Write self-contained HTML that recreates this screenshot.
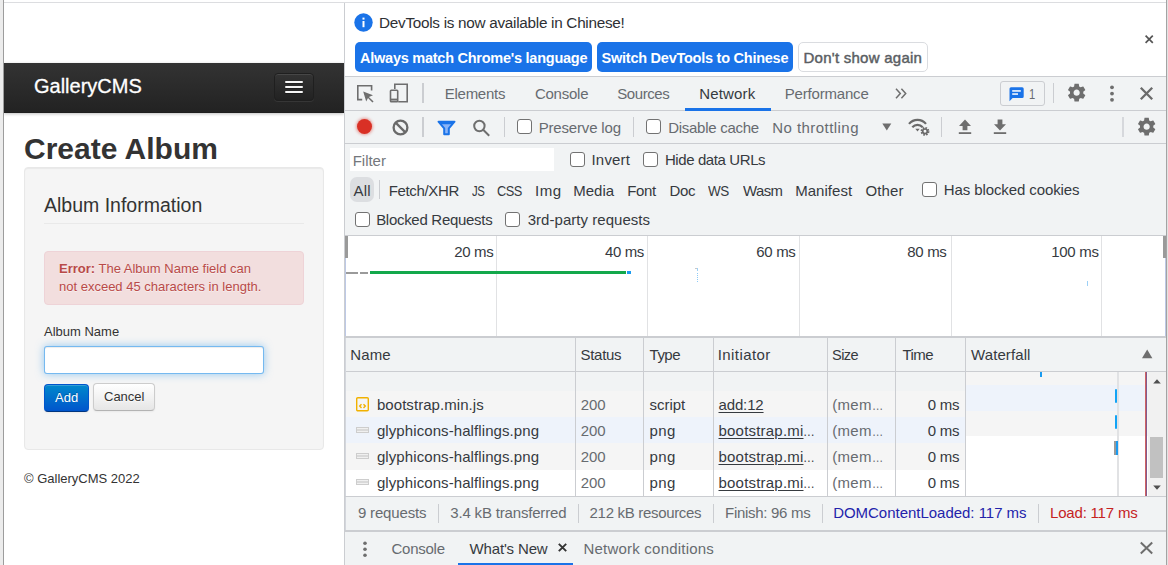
<!DOCTYPE html>
<html lang="en">
<head>
<meta charset="utf-8">
<title>Create Album - GalleryCMS</title>
<style>
*{box-sizing:border-box}
html,body{margin:0;padding:0}
body{width:1168px;height:565px;overflow:hidden;position:relative;background:#fff;
 font-family:"Liberation Sans",Arial,sans-serif;font-size:13px;line-height:18px;color:#333}
.abs,#page *,#dt *{position:absolute}
#page form{position:static;margin:0}
/* ---------- window frame ---------- */
#frameL{left:0;top:0;width:3px;height:565px;background:#ececec}
#frameL2{left:3px;top:0;width:1px;height:565px;background:#9d9d9d}
#frameT{left:4px;top:2px;width:1162px;height:1px;background:#dcdde0}
#frameR{left:1166px;top:0;width:1px;height:565px;background:#a3a3a3}
#frameR2{left:1167px;top:0;width:1px;height:565px;background:#e3e3e3}
/* ---------- page ---------- */
#page{left:4px;top:3px;width:340px;height:562px;overflow:hidden;background:#fff}
#nav{left:0;top:60px;width:340px;height:50px;background:linear-gradient(#333,#222);
 box-shadow:0 1px 3px rgba(0,0,0,.25),inset 0 -1px 0 rgba(0,0,0,.1)}
#brand{left:30px;top:7.5px;-webkit-text-stroke:.3px #fff;font-size:20px;line-height:30px;color:#fff;font-weight:400;white-space:nowrap}
#tog{left:270px;top:10px;width:40px;height:28px;border:1px solid #1f1f1f;border-radius:4px;
 background:linear-gradient(#333,#222);box-shadow:inset 0 1px 0 rgba(255,255,255,.1),0 1px 0 rgba(255,255,255,.075)}
#tog i{left:10px;width:18px;height:2px;background:#f5f5f5;border-radius:1px;box-shadow:0 1px 0 rgba(0,0,0,.25)}
#h1{left:20px;top:128px;margin:0;font-size:30px;line-height:36px;font-weight:700;color:#333;white-space:nowrap}
#well{left:20px;top:164px;width:300px;height:283px;background:#f5f5f5;border:1px solid #e8e8e8;border-radius:4px;
 box-shadow:inset 0 1px 1px rgba(0,0,0,.05)}
#legend{left:19px;top:19px;width:260px;height:37px;font-size:19.5px;line-height:36px;color:#333;border-bottom:1px solid #e9e9e9;white-space:nowrap}
#alert{left:19px;top:83px;width:260px;height:54px;padding:8px 35px 8px 14px;background:#f2dede;border:1px solid #eed3d7;
 border-radius:4px;color:#b94a48;text-shadow:0 1px 0 rgba(255,255,255,.5);font-size:13px;line-height:18px}
#alert *{position:static}
#lbl{left:19px;top:155px;color:#333;white-space:nowrap}
#inp{display:block;margin:0;padding:4px;outline:none;-webkit-appearance:none;appearance:none;font:13px/18px "Liberation Sans",Arial,sans-serif;color:#555;left:19px;top:178px;width:220px;height:28px;background:#fff;border:1px solid rgba(82,168,236,.8);border-radius:3px;
 box-shadow:inset 0 1px 1px rgba(0,0,0,.075),0 0 8px rgba(82,168,236,.6)}
.btn{display:block;margin:0;font-family:inherit;cursor:pointer;text-decoration:none;-webkit-appearance:none;appearance:none;height:28px;padding:4px 10px;font-size:13px;line-height:18px;border-radius:4px;white-space:nowrap;text-align:center}
#add{left:19px;top:216px;width:45px;color:#fff;text-shadow:0 -1px 0 rgba(0,0,0,.25);background:linear-gradient(#08c,#05c);
 border:1px solid #0055cc;border-bottom-color:#003580;box-shadow:inset 0 1px 0 rgba(255,255,255,.2),0 1px 2px rgba(0,0,0,.05)}
#cancel{left:68px;top:215px;width:62px;text-align:left;color:#333;text-shadow:0 1px 1px rgba(255,255,255,.75);background:linear-gradient(#fff,#e6e6e6);
 border:1px solid #ccc;border-bottom-color:#b3b3b3;box-shadow:inset 0 1px 0 rgba(255,255,255,.2),0 1px 2px rgba(0,0,0,.05)}
#foot{left:20px;top:467px;white-space:nowrap;color:#333}
/* ---------- devtools ---------- */
#dt{left:344px;top:3px;width:822px;height:562px;background:#f1f3f4;border-left:1px solid #cbcdd1;overflow:hidden;
 font-size:14.5px;color:#333639}
#dt .hl{left:0;width:821px;height:1px;background:#cbcdd1}
#dt .vl{width:1px;background:#cbcdd1}
#dt .t{white-space:pre;line-height:20px;font-size:15px;transform-origin:0 50%}
#dt .b{font-weight:700}
#dt .semi{-webkit-text-stroke:.45px currentColor}
#dt .u{text-decoration:underline;text-underline-offset:2px;text-decoration-thickness:1px}
#dt .cb{width:15px;height:15px;background:#fff;border:1.4px solid #727272;border-radius:3px}
#dt svg{overflow:visible}
</style>
</head>
<body>
<div class="abs" id="frameL"></div><div class="abs" id="frameL2"></div>
<div class="abs" id="frameT"></div>
<div class="abs" id="frameR"></div><div class="abs" id="frameR2"></div>

<!-- ================= page ================= -->
<div class="abs" id="page">
 <div id="nav">
  <div id="brand">GalleryCMS</div>
  <div id="tog"><i style="top:7px"></i><i style="top:12px"></i><i style="top:17px"></i></div>
 </div>
 <h1 id="h1">Create Album</h1>
 <div id="well">
  <form>
  <div id="legend">Album Information</div>
  <div id="alert"><strong>Error:</strong> The Album Name field can not exceed 45 characters in length.</div>
  <label id="lbl" for="inp">Album Name</label>
  <input id="inp" type="text" name="name" value="" autocomplete="off">
  <button type="button" class="btn" id="add">Add</button>
  <a class="btn" id="cancel">Cancel</a>
  </form>
 </div>
 <div id="foot">© GalleryCMS 2022</div>
</div>

<!-- ================= devtools ================= -->
<div class="abs" id="dt">
<div id="dtin" style="left:-345px;top:-3px;width:1168px;height:565px">
<!-- infobar -->
<div style="left:345px;top:3px;width:821px;height:73px;background:#fff"></div>
<svg style="left:354px;top:12.500px" width="19" height="19" viewBox="0 0 19 19"><circle cx="9.5" cy="9.5" r="9.2" fill="#1a73e8"/><rect x="8.5" y="8" width="2" height="6.2" fill="#fff"/><rect x="8.5" y="4.6" width="2" height="2" fill="#fff"/></svg>
<div style="left:355px;top:42px;width:237px;height:30px;background:#1a73e8;border-radius:5px"></div>
<div style="left:597px;top:42px;width:196px;height:30px;background:#1a73e8;border-radius:5px"></div>
<div style="left:798px;top:42px;width:130px;height:30px;background:#fff;border:1px solid #dadce0;border-radius:5px"></div>
<svg style="left:1144.700px;top:34.800px" width="8.400" height="8.400" viewBox="0 0 8.400 8.400"><path d="M0.600 0.600L7.800 7.800M7.800 0.600L0.600 7.800" stroke="#555" stroke-width="1.700" fill="none"/></svg>
<div class="hl" style="left:345px;top:76px"></div>

<!-- main tab bar 77..110 -->
<svg style="left:356px;top:84px" width="19" height="19" viewBox="0 0 19 19" fill="none" stroke="#6e6e6e" stroke-width="1.6"><path d="M6.2 15.6H1.8V1.8H15.6V6.4"/><path d="M7.2 7.4L17 11.2L12.9 12.9L17.6 17.6L16.4 18.4L12 13.9L10.2 17.6Z" fill="#6e6e6e" stroke="none"/></svg>
<svg style="left:389px;top:83px" width="20" height="20" viewBox="0 0 20 20" fill="none" stroke="#6e6e6e" stroke-width="1.6"><path d="M5.8 6V1.2H18.2V18.8H9.2"/><rect x="1.5" y="7.2" width="7.2" height="11.6" rx="0.8"/><path d="M1.5 16.6H8.7" stroke-width="2"/></svg>
<div class="vl" style="left:422px;top:83px;height:20px;width:1.5px"></div>
<svg style="left:895px;top:88px" width="12" height="11" viewBox="0 0 12 11" fill="none" stroke="#6e6e6e" stroke-width="1.5"><path d="M1 0.8L5.3 5.5L1 10.2M6.4 0.8L10.7 5.5L6.4 10.2"/></svg>
<div style="left:1000px;top:81px;width:45px;height:25px;border:1px solid #cbcdd1;border-radius:3px;background:#f1f3f4"></div>
<svg style="left:1009px;top:87px" width="15" height="15" viewBox="0 0 15 15"><path d="M2 0.3H13.2A1.5 1.5 0 0 1 14.7 1.8V9.6A1.5 1.5 0 0 1 13.2 11.1H3.6L0.5 14.2V1.8A1.5 1.5 0 0 1 2 0.3Z" fill="#1a73e8"/><rect x="3.2" y="3.2" width="8.6" height="1.5" fill="#fff"/><rect x="3.2" y="6.3" width="5.8" height="1.5" fill="#fff"/></svg>
<div class="vl" style="left:1052.5px;top:83px;height:20px;width:1.5px"></div>
<svg class="gear" style="left:1065.800px;top:81.700px" width="21.300" height="21.300" viewBox="0 0 24 24"><path fill="#6e6e6e" d="M19.43 12.98c.04-.32.07-.64.07-.98s-.03-.66-.07-.98l2.11-1.65c.19-.15.24-.42.12-.64l-2-3.46c-.12-.22-.39-.3-.61-.22l-2.49 1c-.52-.4-1.08-.73-1.69-.98l-.38-2.65C14.46 2.18 14.25 2 14 2h-4c-.25 0-.46.18-.49.42l-.38 2.65c-.61.25-1.17.59-1.69.98l-2.49-1c-.23-.09-.49 0-.61.22l-2 3.46c-.13.22-.07.49.12.64l2.11 1.65c-.04.32-.07.65-.07.98s.03.66.07.98l-2.11 1.65c-.19.15-.24.42-.12.64l2 3.46c.12.22.39.3.61.22l2.49-1c.52.4 1.08.73 1.69.98l.38 2.65c.03.24.24.42.49.42h4c.25 0 .46-.18.49-.42l.38-2.65c.61-.25 1.17-.59 1.69-.98l2.49 1c.23.09.49 0 .61-.22l2-3.46c.12-.22.07-.49-.12-.64l-2.11-1.65zM12 15.5c-1.93 0-3.5-1.57-3.5-3.5s1.570-3.5 3.5-3.500 3.500 1.570 3.500 3.500-1.570 3.500-3.500 3.500z"/></svg>
<svg style="left:1110px;top:85px" width="4" height="17" viewBox="0 0 4 17" fill="#6e6e6e"><circle cx="2" cy="2.3" r="1.9"/><circle cx="2" cy="8.6" r="1.9"/><circle cx="2" cy="14.8" r="1.9"/></svg>
<svg style="left:1140px;top:87px" width="13" height="13" viewBox="0 0 13 13"><path d="M0.800 0.800L12.200 12.200M12.200 0.800L0.800 12.200" stroke="#6a6a6a" stroke-width="2.300" fill="none"/></svg>
<div class="hl" style="left:345px;top:110px"></div>
<div style="left:685px;top:108px;width:86px;height:3px;background:#1a73e8"></div>

<!-- network toolbar 111..143 -->
<div style="left:357px;top:119.300px;width:15px;height:15px;border-radius:50%;background:#d93025;box-shadow:0 0 3px 1px rgba(217,48,37,.45)"></div>
<svg style="left:391.500px;top:119px" width="17" height="17" viewBox="0 0 17 17" fill="none" stroke="#6a6a6a" stroke-width="2.300"><circle cx="8.500" cy="8.500" r="6.900"/><path d="M3.600 3.600L13.400 13.400"/></svg>
<div class="vl" style="left:422px;top:117px;height:20px;width:1.5px"></div>
<svg style="left:437px;top:120px" width="19" height="16" viewBox="0 0 19 16"><path d="M1.500 1.700H17.500L11.800 8.400V14.300H7.200V8.400Z" fill="#8ab4f8" stroke="#1a73e8" stroke-width="2" stroke-linejoin="round"/><path d="M2 1.500H17L14.600 4.300H4.400Z" fill="#1a73e8"/></svg>
<svg style="left:472px;top:119px" width="19" height="18" viewBox="0 0 19 18" fill="none" stroke="#6e6e6e" stroke-width="2"><circle cx="7.4" cy="7" r="5.2"/><path d="M11.2 10.8L17.2 16.8"/></svg>
<div class="vl" style="left:504px;top:117px;height:20px;width:1px"></div>
<div class="cb" style="left:516.5px;top:119.2px"></div>
<div class="vl" style="left:632.5px;top:117px;height:20px;width:1px"></div>
<div class="cb" style="left:646px;top:119.2px"></div>
<svg style="left:882px;top:123px" width="10" height="8" viewBox="0 0 10 8"><path d="M0.3 0.6H9.3L4.8 7.6Z" fill="#6e6e6e"/></svg>
<svg style="left:908px;top:118px" width="22" height="18" viewBox="0 0 22 18" fill="none" stroke="#6a6a6a"><path d="M1 5.900C5.600 0.500 13.400 0.500 18 5.900" stroke-width="2.200"/><path d="M4.300 9.200C7.200 6 11.800 6 14.700 9.200" stroke-width="2.200"/><path d="M7.300 10.700H11.700L9.500 13.500Z" fill="#6a6a6a" stroke="none"/><circle cx="17" cy="13.300" r="3.300" stroke-width="2.300" stroke-dasharray="1.500 1.090"/><circle cx="17" cy="13.300" r="2.300" stroke-width="1.700"/></svg>
<div class="vl" style="left:941px;top:117px;height:20px;width:1px"></div>
<svg style="left:958px;top:119.300px" width="14" height="16" viewBox="0 0 14 16" fill="#6e6e6e"><path d="M7 0.6L13 7H9.4V11.2H4.600V7H1Z"/><rect x="0.8" y="13.2" width="12.4" height="1.800"/></svg>
<svg style="left:993px;top:119.300px" width="14" height="16" viewBox="0 0 14 16" fill="#6e6e6e"><path d="M7 11.600L13 5.200H9.4V0.600H4.600V5.200H1Z"/><rect x="0.8" y="13.2" width="12.4" height="1.800"/></svg>
<div class="vl" style="left:1122px;top:117px;height:20px;width:2px;background:#d6d8dc"></div>
<svg class="gear" style="left:1135.500px;top:115.800px" width="21.300" height="21.300" viewBox="0 0 24 24"><path fill="#6e6e6e" d="M19.43 12.98c.04-.32.07-.64.07-.98s-.03-.66-.07-.98l2.11-1.65c.19-.15.24-.42.12-.64l-2-3.46c-.12-.22-.39-.3-.61-.22l-2.49 1c-.52-.4-1.08-.73-1.69-.98l-.38-2.65C14.46 2.18 14.25 2 14 2h-4c-.25 0-.46.18-.49.42l-.38 2.65c-.61.25-1.17.59-1.69.98l-2.49-1c-.23-.09-.49 0-.61.22l-2 3.46c-.13.22-.07.49.12.64l2.11 1.65c-.04.32-.07.65-.07.98s.03.66.07.98l-2.11 1.65c-.19.15-.24.42-.12.64l2 3.46c.12.22.39.3.61.22l2.49-1c.52.4 1.08.73 1.69.98l.38 2.65c.03.24.24.42.49.42h4c.25 0 .46-.18.49-.42l.38-2.65c.61-.25 1.17-.59 1.69-.98l2.49 1c.23.09.49 0 .61-.22l2-3.46c.12-.22.07-.49-.12-.64l-2.11-1.65zM12 15.5c-1.93 0-3.5-1.57-3.5-3.5s1.570-3.5 3.5-3.500 3.500 1.570 3.500 3.500-1.570 3.500-3.500 3.500z"/></svg>
<div class="hl" style="left:345px;top:143px"></div>

<!-- filter area 144..235 -->
<div style="left:350px;top:148px;width:204px;height:23px;background:#fff"></div>
<div class="cb" style="left:570px;top:152.2px"></div>
<div class="cb" style="left:643px;top:152.2px"></div>
<div style="left:350px;top:177px;width:23.500px;height:25px;background:#dcdee1;border-radius:7px"></div>
<div class="vl" style="left:379.300px;top:180px;height:19px;width:1px"></div>
<div class="cb" style="left:922px;top:182px"></div>
<div class="cb" style="left:355px;top:212.2px"></div>
<div class="cb" style="left:505px;top:212.2px"></div>
<div class="hl" style="left:345px;top:235px"></div>

<!-- overview 236..336 -->
<div style="left:345px;top:236px;width:821px;height:100px;background:#fff"></div>
<div style="left:345px;top:258px;width:1px;height:78px;background:#bdc9e6"></div>
<div style="left:1165px;top:258px;width:1px;height:78px;background:#bdc9e6"></div>
<div style="left:345px;top:236px;width:3px;height:22px;background:#9a9a9a"></div>
<div style="left:1163px;top:236px;width:3px;height:22px;background:#9a9a9a"></div>
<div style="left:496px;top:236px;width:1px;height:100px;background:#e1e2e4"></div>
<div style="left:647px;top:236px;width:1px;height:100px;background:#e1e2e4"></div>
<div style="left:799px;top:236px;width:1px;height:100px;background:#e1e2e4"></div>
<div style="left:950.500px;top:236px;width:1px;height:100px;background:#e1e2e4"></div>
<div style="left:1101px;top:236px;width:1px;height:100px;background:#e1e2e4"></div>
<div style="left:346px;top:271.500px;width:11.500px;height:2.700px;background:#9a9a9a"></div>
<div style="left:359.500px;top:271.500px;width:8.500px;height:2.700px;background:#9a9a9a"></div>
<div style="left:370px;top:271.300px;width:256px;height:3px;background:#13a84b"></div>
<div style="left:626.500px;top:271.300px;width:4.500px;height:3px;background:#1a9bf0"></div>
<div style="left:694.500px;top:268px;width:2px;height:1px;background:#c8c8c8"></div>
<div style="left:696.500px;top:268px;width:1px;height:3px;background:#9cd0f7"></div>
<div style="left:696.500px;top:273px;width:1px;height:9px;background:repeating-linear-gradient(#8ccaf7 0 1px,#fff 1px 2px)"></div>
<div style="left:1086.500px;top:281px;width:1px;height:5px;background:#9cd0f7"></div>
<div style="left:345px;top:336px;width:821px;height:2px;background:#cbcdd1"></div>

<!-- table header 338..371 -->
<div class="hl" style="left:345px;top:371px"></div>
<svg style="left:1142px;top:349px" width="11" height="10" viewBox="0 0 11 10"><path d="M5.2 0.4L10.4 9.2H0Z" fill="#6e6e6e"/></svg>

<!-- rows -->
<div style="left:345px;top:372px;width:621px;height:19px;background:#f1f3f4"></div>
<div style="left:345px;top:391px;width:621px;height:26px;background:#f5f5f5"></div>
<div style="left:345px;top:417px;width:621px;height:26px;background:#eef3fb"></div>
<div style="left:345px;top:443px;width:621px;height:27px;background:#f5f5f5"></div>
<div style="left:345px;top:470px;width:621px;height:26px;background:#fff"></div>
<!-- waterfall column -->
<div style="left:966px;top:372px;width:182px;height:13px;background:#f5f5f5"></div>
<div style="left:966px;top:385px;width:182px;height:26px;background:#eef3fb"></div>
<div style="left:966px;top:411px;width:182px;height:25px;background:#f5f5f5"></div>
<div style="left:966px;top:436px;width:182px;height:60px;background:#fff"></div>
<div style="left:1117.200px;top:372px;width:1.400px;height:124px;background:#e1e2e4"></div>
<div style="left:1145px;top:372px;width:1px;height:124px;background:#cf6262"></div>
<div style="left:1146px;top:372px;width:1px;height:124px;background:#85598c"></div>
<div style="left:1040px;top:372px;width:2px;height:5px;background:#1a9bf0"></div>
<div style="left:1115px;top:389px;width:2.300px;height:14px;background:#12a3f5;border-radius:1px"></div>
<div style="left:1115px;top:415px;width:2.300px;height:14px;background:#12a3f5;border-radius:1px"></div>
<div style="left:1114px;top:441px;width:2px;height:14px;background:#9a9a9a"></div>
<div style="left:1115.500px;top:441px;width:2px;height:14px;background:#1a9bf0"></div>
<!-- scrollbar -->
<div style="left:1148px;top:372px;width:18px;height:124px;background:#f1f1f1"></div>
<svg style="left:1153px;top:378.500px" width="8" height="5" viewBox="0 0 8 5"><path d="M4 0.300L7.800 4.600H0.200Z" fill="#505050"/></svg>
<svg style="left:1153px;top:485px" width="8" height="5" viewBox="0 0 8 5"><path d="M4 4.700L7.800 0.400H0.200Z" fill="#505050"/></svg>
<div style="left:1150px;top:437px;width:13px;height:41px;background:#c1c1c1"></div>
<!-- column dividers -->
<div class="vl" style="left:575px;top:338px;height:158px"></div>
<div class="vl" style="left:643.200px;top:338px;height:158px"></div>
<div class="vl" style="left:713px;top:338px;height:158px"></div>
<div class="vl" style="left:827px;top:338px;height:158px"></div>
<div class="vl" style="left:895px;top:338px;height:158px"></div>
<div class="vl" style="left:965px;top:338px;height:158px"></div>
<!-- row icons -->
<svg style="left:356px;top:396.600px" width="13" height="15" viewBox="0 0 13 15" fill="none" stroke="#f1b100"><rect x="0.700" y="0.700" width="11.600" height="13.100" rx="1.100" stroke-width="1.400"/><path d="M5.500 7.300L3.700 9.100L5.500 10.900M7.500 7.300L9.300 9.100L7.500 10.900" stroke-width="1.400"/></svg>
<div style="left:356px;top:427.200px;width:13px;height:5.700px;background:linear-gradient(#f0f0f0 0 1px,#d9d9d9 1px 3px,#f0f0f0 3px);border:1px solid #cdcdcd"></div>
<div style="left:356px;top:453.200px;width:13px;height:5.700px;background:linear-gradient(#f0f0f0 0 1px,#d9d9d9 1px 3px,#f0f0f0 3px);border:1px solid #cdcdcd"></div>
<div style="left:356px;top:479.200px;width:13px;height:5.700px;background:linear-gradient(#f0f0f0 0 1px,#d9d9d9 1px 3px,#f0f0f0 3px);border:1px solid #cdcdcd"></div>

<div style="left:345px;top:338px;width:1px;height:192px;background:#d3d6dc"></div>
<!-- status bar 497..529 -->
<div class="hl" style="left:345px;top:496px"></div>
<div class="vl" style="left:438px;top:503.500px;height:19px"></div>
<div class="vl" style="left:578px;top:503.500px;height:19px"></div>
<div class="vl" style="left:712.700px;top:503.500px;height:19px"></div>
<div class="vl" style="left:822px;top:503.500px;height:19px"></div>
<div class="vl" style="left:1037.800px;top:503.500px;height:19px"></div>
<div style="left:345px;top:530px;width:821px;height:2px;background:#cbcdd1"></div>

<!-- drawer 531..565 -->
<svg style="left:363px;top:541px" width="4" height="17" viewBox="0 0 4 17" fill="#6e6e6e"><circle cx="2" cy="2.300" r="1.800"/><circle cx="2" cy="8.300" r="1.800"/><circle cx="2" cy="14.300" r="1.800"/></svg>
<svg style="left:557.500px;top:543.400px" width="9" height="9" viewBox="0 0 9 9"><path d="M0.800 0.800L8.200 8.200M8.200 0.800L0.800 8.200" stroke="#333" stroke-width="1.900" fill="none"/></svg>
<div style="left:457.500px;top:562.500px;width:115px;height:3px;background:#1a73e8"></div>
<svg style="left:1140px;top:542px" width="13" height="12" viewBox="0 0 13 12"><path d="M0.800 0.600L12.200 11.400M12.200 0.600L0.800 11.400" stroke="#6e6e6e" stroke-width="2" fill="none"/></svg>

<span class="t" style="left:379.06px;top:12.65px;color:#2e3034;font-size:15.3px;letter-spacing:-0.284px;">DevTools is now available in Chinese!</span>
<span class="t b" style="left:360.06px;top:47.65px;color:#fff;font-size:14.5px;letter-spacing:-0.251px;">Always match Chrome's language</span>
<span class="t b" style="left:601.60px;top:47.65px;color:#fff;font-size:14.5px;letter-spacing:-0.248px;">Switch DevTools to Chinese</span>
<span class="t semi" style="left:803.50px;top:47.65px;color:#5a5e63;letter-spacing:0.255px;">Don't show again</span>
<span class="t" style="left:444.70px;top:83.65px;color:#676b70;letter-spacing:-0.247px;">Elements</span>
<span class="t" style="left:534.94px;top:83.65px;color:#676b70;letter-spacing:-0.248px;">Console</span>
<span class="t" style="left:617.26px;top:83.65px;color:#676b70;letter-spacing:-0.415px;">Sources</span>
<span class="t" style="left:699.30px;top:83.65px;color:#363a3f;letter-spacing:0.154px;">Network</span>
<span class="t" style="left:784.70px;top:83.65px;color:#676b70;letter-spacing:-0.178px;">Performance</span>
<span class="t" style="left:1029.30px;top:83.65px;color:#676b70;transform:scaleX(0.7431);">1</span>
<span class="t" style="left:538.70px;top:117.65px;color:#676b70;letter-spacing:-0.169px;">Preserve log</span>
<span class="t" style="left:668.24px;top:117.65px;color:#676b70;letter-spacing:-0.283px;">Disable cache</span>
<span class="t" style="left:772.24px;top:117.65px;color:#676b70;letter-spacing:0.449px;">No throttling</span>
<span class="t" style="left:352.70px;top:150.65px;color:#74777c;letter-spacing:-0.021px;">Filter</span>
<span class="t" style="left:591.52px;top:149.65px;color:#363a3f;letter-spacing:0.181px;">Invert</span>
<span class="t" style="left:664.88px;top:149.65px;color:#363a3f;letter-spacing:-0.398px;">Hide data URLs</span>
<span class="t" style="left:353.50px;top:180.65px;color:#363a3f;letter-spacing:0.164px;">All</span>
<span class="t" style="left:388.70px;top:180.65px;color:#363a3f;letter-spacing:-0.345px;">Fetch/XHR</span>
<span class="t" style="left:471.74px;top:180.65px;color:#363a3f;letter-spacing:-0.550px;transform:scaleX(0.7580);">JS</span>
<span class="t" style="left:497.30px;top:180.65px;color:#363a3f;letter-spacing:-0.550px;transform:scaleX(0.8540);">CSS</span>
<span class="t" style="left:534.52px;top:180.65px;color:#363a3f;letter-spacing:0.550px;transform:scaleX(1.0063);">Img</span>
<span class="t" style="left:573.26px;top:180.65px;color:#363a3f;letter-spacing:-0.015px;">Media</span>
<span class="t" style="left:627.24px;top:180.65px;color:#363a3f;letter-spacing:-0.339px;">Font</span>
<span class="t" style="left:669.60px;top:180.65px;color:#363a3f;letter-spacing:-0.344px;">Doc</span>
<span class="t" style="left:708.40px;top:180.65px;color:#363a3f;letter-spacing:-0.550px;transform:scaleX(0.8975);">WS</span>
<span class="t" style="left:742.70px;top:180.65px;color:#363a3f;letter-spacing:-0.550px;transform:scaleX(0.9925);">Wasm</span>
<span class="t" style="left:795.14px;top:180.65px;color:#363a3f;letter-spacing:0.057px;">Manifest</span>
<span class="t" style="left:865.50px;top:180.65px;color:#363a3f;letter-spacing:0.121px;">Other</span>
<span class="t" style="left:943.70px;top:179.65px;color:#363a3f;letter-spacing:-0.093px;">Has blocked cookies</span>
<span class="t" style="left:376.14px;top:209.65px;color:#363a3f;letter-spacing:-0.290px;">Blocked Requests</span>
<span class="t" style="left:527.70px;top:209.65px;color:#363a3f;letter-spacing:0.037px;">3rd-party requests</span>
<span class="t" style="left:454.20px;top:241.65px;color:#363a3f;letter-spacing:-0.340px;">20 ms</span>
<span class="t" style="left:605.06px;top:241.65px;color:#363a3f;letter-spacing:-0.380px;">40 ms</span>
<span class="t" style="left:756.30px;top:241.65px;color:#363a3f;letter-spacing:-0.340px;">60 ms</span>
<span class="t" style="left:907.30px;top:241.65px;color:#363a3f;letter-spacing:-0.340px;">80 ms</span>
<span class="t" style="left:1051.20px;top:241.65px;color:#363a3f;letter-spacing:-0.269px;">100 ms</span>
<span class="t" style="left:350.26px;top:344.65px;color:#363a3f;letter-spacing:0.108px;">Name</span>
<span class="t" style="left:580.60px;top:344.65px;color:#363a3f;letter-spacing:-0.326px;">Status</span>
<span class="t" style="left:649.60px;top:344.65px;color:#363a3f;letter-spacing:-0.544px;">Type</span>
<span class="t" style="left:717.70px;top:344.65px;color:#363a3f;letter-spacing:0.425px;">Initiator</span>
<span class="t" style="left:832.26px;top:344.65px;color:#363a3f;letter-spacing:-0.550px;transform:scaleX(0.9703);">Size</span>
<span class="t" style="left:902.40px;top:344.65px;color:#363a3f;letter-spacing:-0.494px;">Time</span>
<span class="t" style="left:971.06px;top:344.65px;color:#363a3f;letter-spacing:0.089px;">Waterfall</span>
<span class="t" style="left:376.94px;top:394.65px;color:#363a3f;letter-spacing:0.058px;">bootstrap.min.js</span>
<span class="t" style="left:580.80px;top:394.65px;color:#676b70;letter-spacing:-0.166px;">200</span>
<span class="t" style="left:649.60px;top:394.65px;color:#363a3f;letter-spacing:-0.029px;">script</span>
<span class="t u" style="left:718.50px;top:394.65px;color:#363a3f;letter-spacing:-0.138px;">add:12</span>
<span class="t" style="left:832.26px;top:394.65px;color:#676b70;letter-spacing:0.304px;">(mem</span>
<span class="t" style="left:871.70px;top:394.65px;color:#676b70;transform:scaleX(0.7493);">…</span>
<span class="t" style="left:927.70px;top:394.65px;color:#363a3f;letter-spacing:-0.205px;">0 ms</span>
<span class="t" style="left:376.94px;top:420.65px;color:#363a3f;letter-spacing:0.087px;">glyphicons-halflings.png</span>
<span class="t" style="left:580.80px;top:420.65px;color:#676b70;letter-spacing:-0.166px;">200</span>
<span class="t" style="left:649.60px;top:420.65px;color:#363a3f;letter-spacing:0.334px;">png</span>
<span class="t u" style="left:718.50px;top:420.65px;color:#363a3f;letter-spacing:0.205px;">bootstrap.mi</span>
<span class="t" style="left:803.06px;top:420.65px;color:#363a3f;transform:scaleX(0.7867);">…</span>
<span class="t" style="left:832.26px;top:420.65px;color:#676b70;letter-spacing:0.304px;">(mem</span>
<span class="t" style="left:871.70px;top:420.65px;color:#676b70;transform:scaleX(0.7493);">…</span>
<span class="t" style="left:927.70px;top:420.65px;color:#363a3f;letter-spacing:-0.205px;">0 ms</span>
<span class="t" style="left:376.94px;top:446.65px;color:#363a3f;letter-spacing:0.087px;">glyphicons-halflings.png</span>
<span class="t" style="left:580.80px;top:446.65px;color:#676b70;letter-spacing:-0.166px;">200</span>
<span class="t" style="left:649.60px;top:446.65px;color:#363a3f;letter-spacing:0.334px;">png</span>
<span class="t u" style="left:718.50px;top:446.65px;color:#363a3f;letter-spacing:0.205px;">bootstrap.mi</span>
<span class="t" style="left:803.06px;top:446.65px;color:#363a3f;transform:scaleX(0.7867);">…</span>
<span class="t" style="left:832.26px;top:446.65px;color:#676b70;letter-spacing:0.304px;">(mem</span>
<span class="t" style="left:871.70px;top:446.65px;color:#676b70;transform:scaleX(0.7493);">…</span>
<span class="t" style="left:927.70px;top:446.65px;color:#363a3f;letter-spacing:-0.205px;">0 ms</span>
<span class="t" style="left:376.94px;top:472.65px;color:#363a3f;letter-spacing:0.087px;">glyphicons-halflings.png</span>
<span class="t" style="left:580.80px;top:472.65px;color:#676b70;letter-spacing:-0.166px;">200</span>
<span class="t" style="left:649.60px;top:472.65px;color:#363a3f;letter-spacing:0.334px;">png</span>
<span class="t u" style="left:718.50px;top:472.65px;color:#363a3f;letter-spacing:0.205px;">bootstrap.mi</span>
<span class="t" style="left:803.06px;top:472.65px;color:#363a3f;transform:scaleX(0.7867);">…</span>
<span class="t" style="left:832.26px;top:472.65px;color:#676b70;letter-spacing:0.304px;">(mem</span>
<span class="t" style="left:871.70px;top:472.65px;color:#676b70;transform:scaleX(0.7493);">…</span>
<span class="t" style="left:927.70px;top:472.65px;color:#363a3f;letter-spacing:-0.205px;">0 ms</span>
<span class="t" style="left:357.94px;top:502.65px;color:#676b70;letter-spacing:-0.165px;">9 requests</span>
<span class="t" style="left:450.30px;top:502.65px;color:#676b70;letter-spacing:-0.178px;">3.4 kB transferred</span>
<span class="t" style="left:589.60px;top:502.65px;color:#676b70;letter-spacing:-0.316px;">212 kB resources</span>
<span class="t" style="left:725.06px;top:502.65px;color:#676b70;letter-spacing:-0.297px;">Finish: 96 ms</span>
<span class="t" style="left:833.14px;top:502.65px;color:#2323ab;letter-spacing:-0.023px;">DOMContentLoaded: 117 ms</span>
<span class="t" style="left:1050.06px;top:502.65px;color:#c5221f;letter-spacing:-0.195px;">Load: 117 ms</span>
<span class="t" style="left:391.50px;top:538.65px;color:#676b70;letter-spacing:-0.248px;">Console</span>
<span class="t" style="left:469.50px;top:538.65px;color:#363a3f;letter-spacing:-0.151px;">What's New</span>
<span class="t" style="left:583.52px;top:538.65px;color:#676b70;letter-spacing:0.209px;">Network conditions</span>
</div>
</div>
</body>
</html>
